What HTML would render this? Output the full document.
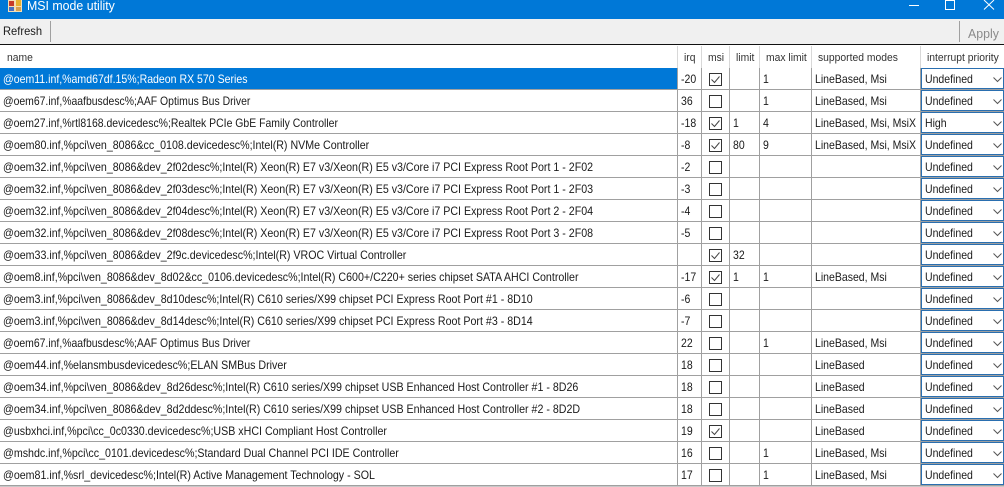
<!DOCTYPE html>
<html><head><meta charset="utf-8"><style>
html,body{margin:0;padding:0;background:#fff}
body{width:1004px;height:487px;position:relative;overflow:hidden;font:12px "Liberation Sans",sans-serif;color:#1a1a1a}
.a{position:absolute}
.o{transform-origin:0 50%}
#t{left:0;top:0;width:1004px;height:19px;background:#0078d7}
#tb{left:0;top:19px;width:1004px;height:25px;background:#f0f0f0}
#bl{left:0;top:44px;width:1004px;height:1px;background:#111}
.r{position:absolute;left:0;width:1004px;height:21px;border-bottom:1px solid #a0a0a0;white-space:nowrap;line-height:23px}
.r span{position:absolute;top:0;transform:scaleX(.875);transform-origin:0 50%}
.r span.n{transform:scaleX(.888)}
.h span{position:absolute;top:0;transform:scaleX(.94);transform-origin:0 50%}
.n{left:3px}.i{left:681px}.l{left:733px}.m{left:763px}.s{left:815px}
.v{position:absolute;top:0;width:1px;height:22px;background:#a0a0a0}
.h .v{background:#d8d8d8}
.c{position:absolute;left:709px;top:5px;width:11px;height:11px;border:1px solid #333;background:#fff}
.c svg{position:absolute;left:0;top:0}
.d{position:absolute;left:921px;top:0;width:81px;height:19px;border:1px solid #2a6fb0;background:#fff;line-height:21px}
.d b{position:absolute;left:3px;top:0;font-weight:normal;transform:scaleX(.875);transform-origin:0 50%}
.d svg{position:absolute;right:1px;top:8px}
.h{position:absolute;left:0;top:46px;width:1004px;height:22px;line-height:24px;font-size:11px;color:#333;white-space:nowrap}
.sel{background:#0078d7;color:#fff}
</style></head><body>
<div class="a" id="t"></div>
<svg class="a" style="left:8px;top:0" width="14" height="12" viewBox="0 0 14 12"><rect x="0" y="0" width="14" height="12" fill="#f5deb3"/><rect x="1" y="1" width="5" height="5" fill="#c83a2a"/><rect x="8" y="0" width="5" height="6" fill="#e8b030"/><rect x="1" y="7" width="5" height="4" fill="#4a6fc0"/><rect x="8" y="7" width="5" height="4" fill="#d9a050"/></svg>
<div class="a o" style="left:27px;top:-2px;color:#fff;font-size:13px;line-height:16px;transform:scaleX(.95);white-space:nowrap">MSI mode utility</div>
<svg class="a" style="left:900px;top:0" width="104" height="19" viewBox="0 0 104 19" fill="none" stroke="#fff" stroke-width="1"><path d="M9 5.5H19"/><rect x="45.5" y="0.5" width="9" height="9"/><path d="M84 0L94 9.5M94 0L84 9.5"/></svg>
<div class="a" id="tb"></div>
<div class="a o" style="left:3px;top:23px;line-height:16px;transform:scaleX(.93);white-space:nowrap">Refresh</div>
<div class="a" style="left:50px;top:21px;width:1px;height:21px;background:#a0a0a0"></div>
<div class="a" style="left:959px;top:21px;width:1px;height:21px;background:#a0a0a0"></div>
<div class="a o" style="left:968px;top:26px;line-height:16px;color:#8a8a8a;font-size:13px;transform:scaleX(.95);white-space:nowrap">Apply</div>
<div class="a" id="bl"></div>
<div class="h"><span style="left:7px">name</span><span style="left:684px">irq</span><span style="left:708px">msi</span><span style="left:736px">limit</span><span style="left:766px">max limit</span><span style="left:818px">supported modes</span><span style="left:927px">interrupt priority</span>
<i class="v" style="left:677px"></i><i class="v" style="left:701px"></i><i class="v" style="left:729px"></i><i class="v" style="left:759px"></i><i class="v" style="left:811px"></i><i class="v" style="left:920px"></i></div>

<div class="r" style="top:68px"><div class="a sel" style="left:0;top:0;width:677px;height:21px"></div><span class="n" style="color:#fff;transform:scaleX(.879)">@oem11.inf,%amd67df.15%;Radeon RX 570 Series</span><span class="i">-20</span><div class="c"><svg width="11" height="11" viewBox="0 0 11 11" fill="none" stroke="#444"><path d="M1.5 5.5L4.5 8.5L9.5 2.5"/></svg></div><span class="m">1</span><span class="s">LineBased, Msi</span><i class="v" style="left:677px"></i><i class="v" style="left:701px"></i><i class="v" style="left:729px"></i><i class="v" style="left:759px"></i><i class="v" style="left:811px"></i><i class="v" style="left:920px"></i><div class="d"><b>Undefined</b><svg width="9" height="6" fill="none" stroke="#555"><path d="M0.5 0.5L4.5 4.5L8.5 0.5"/></svg></div></div>
<div class="r" style="top:90px"><span class="n" style="transform:scaleX(.868)">@oem67.inf,%aafbusdesc%;AAF Optimus Bus Driver</span><span class="i">36</span><div class="c"></div><span class="m">1</span><span class="s">LineBased, Msi</span><i class="v" style="left:677px"></i><i class="v" style="left:701px"></i><i class="v" style="left:729px"></i><i class="v" style="left:759px"></i><i class="v" style="left:811px"></i><i class="v" style="left:920px"></i><div class="d"><b>Undefined</b><svg width="9" height="6" fill="none" stroke="#555"><path d="M0.5 0.5L4.5 4.5L8.5 0.5"/></svg></div></div>
<div class="r" style="top:112px"><span class="n" style="transform:scaleX(.87)">@oem27.inf,%rtl8168.devicedesc%;Realtek PCIe GbE Family Controller</span><span class="i">-18</span><div class="c"><svg width="11" height="11" viewBox="0 0 11 11" fill="none" stroke="#444"><path d="M1.5 5.5L4.5 8.5L9.5 2.5"/></svg></div><span class="l">1</span><span class="m">4</span><span class="s">LineBased, Msi, MsiX</span><i class="v" style="left:677px"></i><i class="v" style="left:701px"></i><i class="v" style="left:729px"></i><i class="v" style="left:759px"></i><i class="v" style="left:811px"></i><i class="v" style="left:920px"></i><div class="d"><b>High</b><svg width="9" height="6" fill="none" stroke="#555"><path d="M0.5 0.5L4.5 4.5L8.5 0.5"/></svg></div></div>
<div class="r" style="top:134px"><span class="n">@oem80.inf,%pci\ven_8086&amp;cc_0108.devicedesc%;Intel(R) NVMe Controller</span><span class="i">-8</span><div class="c"><svg width="11" height="11" viewBox="0 0 11 11" fill="none" stroke="#444"><path d="M1.5 5.5L4.5 8.5L9.5 2.5"/></svg></div><span class="l">80</span><span class="m">9</span><span class="s">LineBased, Msi, MsiX</span><i class="v" style="left:677px"></i><i class="v" style="left:701px"></i><i class="v" style="left:729px"></i><i class="v" style="left:759px"></i><i class="v" style="left:811px"></i><i class="v" style="left:920px"></i><div class="d"><b>Undefined</b><svg width="9" height="6" fill="none" stroke="#555"><path d="M0.5 0.5L4.5 4.5L8.5 0.5"/></svg></div></div>
<div class="r" style="top:156px"><span class="n">@oem32.inf,%pci\ven_8086&amp;dev_2f02desc%;Intel(R) Xeon(R) E7 v3/Xeon(R) E5 v3/Core i7 PCI Express Root Port 1 - 2F02</span><span class="i">-2</span><div class="c"></div><i class="v" style="left:677px"></i><i class="v" style="left:701px"></i><i class="v" style="left:729px"></i><i class="v" style="left:759px"></i><i class="v" style="left:811px"></i><i class="v" style="left:920px"></i><div class="d"><b>Undefined</b><svg width="9" height="6" fill="none" stroke="#555"><path d="M0.5 0.5L4.5 4.5L8.5 0.5"/></svg></div></div>
<div class="r" style="top:178px"><span class="n">@oem32.inf,%pci\ven_8086&amp;dev_2f03desc%;Intel(R) Xeon(R) E7 v3/Xeon(R) E5 v3/Core i7 PCI Express Root Port 1 - 2F03</span><span class="i">-3</span><div class="c"></div><i class="v" style="left:677px"></i><i class="v" style="left:701px"></i><i class="v" style="left:729px"></i><i class="v" style="left:759px"></i><i class="v" style="left:811px"></i><i class="v" style="left:920px"></i><div class="d"><b>Undefined</b><svg width="9" height="6" fill="none" stroke="#555"><path d="M0.5 0.5L4.5 4.5L8.5 0.5"/></svg></div></div>
<div class="r" style="top:200px"><span class="n">@oem32.inf,%pci\ven_8086&amp;dev_2f04desc%;Intel(R) Xeon(R) E7 v3/Xeon(R) E5 v3/Core i7 PCI Express Root Port 2 - 2F04</span><span class="i">-4</span><div class="c"></div><i class="v" style="left:677px"></i><i class="v" style="left:701px"></i><i class="v" style="left:729px"></i><i class="v" style="left:759px"></i><i class="v" style="left:811px"></i><i class="v" style="left:920px"></i><div class="d"><b>Undefined</b><svg width="9" height="6" fill="none" stroke="#555"><path d="M0.5 0.5L4.5 4.5L8.5 0.5"/></svg></div></div>
<div class="r" style="top:222px"><span class="n">@oem32.inf,%pci\ven_8086&amp;dev_2f08desc%;Intel(R) Xeon(R) E7 v3/Xeon(R) E5 v3/Core i7 PCI Express Root Port 3 - 2F08</span><span class="i">-5</span><div class="c"></div><i class="v" style="left:677px"></i><i class="v" style="left:701px"></i><i class="v" style="left:729px"></i><i class="v" style="left:759px"></i><i class="v" style="left:811px"></i><i class="v" style="left:920px"></i><div class="d"><b>Undefined</b><svg width="9" height="6" fill="none" stroke="#555"><path d="M0.5 0.5L4.5 4.5L8.5 0.5"/></svg></div></div>
<div class="r" style="top:244px"><span class="n">@oem33.inf,%pci\ven_8086&amp;dev_2f9c.devicedesc%;Intel(R) VROC Virtual Controller</span><div class="c"><svg width="11" height="11" viewBox="0 0 11 11" fill="none" stroke="#444"><path d="M1.5 5.5L4.5 8.5L9.5 2.5"/></svg></div><span class="l">32</span><i class="v" style="left:677px"></i><i class="v" style="left:701px"></i><i class="v" style="left:729px"></i><i class="v" style="left:759px"></i><i class="v" style="left:811px"></i><i class="v" style="left:920px"></i><div class="d"><b>Undefined</b><svg width="9" height="6" fill="none" stroke="#555"><path d="M0.5 0.5L4.5 4.5L8.5 0.5"/></svg></div></div>
<div class="r" style="top:266px"><span class="n">@oem8.inf,%pci\ven_8086&amp;dev_8d02&amp;cc_0106.devicedesc%;Intel(R) C600+/C220+ series chipset SATA AHCI Controller</span><span class="i">-17</span><div class="c"><svg width="11" height="11" viewBox="0 0 11 11" fill="none" stroke="#444"><path d="M1.5 5.5L4.5 8.5L9.5 2.5"/></svg></div><span class="l">1</span><span class="m">1</span><span class="s">LineBased, Msi</span><i class="v" style="left:677px"></i><i class="v" style="left:701px"></i><i class="v" style="left:729px"></i><i class="v" style="left:759px"></i><i class="v" style="left:811px"></i><i class="v" style="left:920px"></i><div class="d"><b>Undefined</b><svg width="9" height="6" fill="none" stroke="#555"><path d="M0.5 0.5L4.5 4.5L8.5 0.5"/></svg></div></div>
<div class="r" style="top:288px"><span class="n">@oem3.inf,%pci\ven_8086&amp;dev_8d10desc%;Intel(R) C610 series/X99 chipset PCI Express Root Port #1 - 8D10</span><span class="i">-6</span><div class="c"></div><i class="v" style="left:677px"></i><i class="v" style="left:701px"></i><i class="v" style="left:729px"></i><i class="v" style="left:759px"></i><i class="v" style="left:811px"></i><i class="v" style="left:920px"></i><div class="d"><b>Undefined</b><svg width="9" height="6" fill="none" stroke="#555"><path d="M0.5 0.5L4.5 4.5L8.5 0.5"/></svg></div></div>
<div class="r" style="top:310px"><span class="n">@oem3.inf,%pci\ven_8086&amp;dev_8d14desc%;Intel(R) C610 series/X99 chipset PCI Express Root Port #3 - 8D14</span><span class="i">-7</span><div class="c"></div><i class="v" style="left:677px"></i><i class="v" style="left:701px"></i><i class="v" style="left:729px"></i><i class="v" style="left:759px"></i><i class="v" style="left:811px"></i><i class="v" style="left:920px"></i><div class="d"><b>Undefined</b><svg width="9" height="6" fill="none" stroke="#555"><path d="M0.5 0.5L4.5 4.5L8.5 0.5"/></svg></div></div>
<div class="r" style="top:332px"><span class="n" style="transform:scaleX(.868)">@oem67.inf,%aafbusdesc%;AAF Optimus Bus Driver</span><span class="i">22</span><div class="c"></div><span class="m">1</span><span class="s">LineBased, Msi</span><i class="v" style="left:677px"></i><i class="v" style="left:701px"></i><i class="v" style="left:729px"></i><i class="v" style="left:759px"></i><i class="v" style="left:811px"></i><i class="v" style="left:920px"></i><div class="d"><b>Undefined</b><svg width="9" height="6" fill="none" stroke="#555"><path d="M0.5 0.5L4.5 4.5L8.5 0.5"/></svg></div></div>
<div class="r" style="top:354px"><span class="n">@oem44.inf,%elansmbusdevicedesc%;ELAN SMBus Driver</span><span class="i">18</span><div class="c"></div><span class="s">LineBased</span><i class="v" style="left:677px"></i><i class="v" style="left:701px"></i><i class="v" style="left:729px"></i><i class="v" style="left:759px"></i><i class="v" style="left:811px"></i><i class="v" style="left:920px"></i><div class="d"><b>Undefined</b><svg width="9" height="6" fill="none" stroke="#555"><path d="M0.5 0.5L4.5 4.5L8.5 0.5"/></svg></div></div>
<div class="r" style="top:376px"><span class="n">@oem34.inf,%pci\ven_8086&amp;dev_8d26desc%;Intel(R) C610 series/X99 chipset USB Enhanced Host Controller #1 - 8D26</span><span class="i">18</span><div class="c"></div><span class="s">LineBased</span><i class="v" style="left:677px"></i><i class="v" style="left:701px"></i><i class="v" style="left:729px"></i><i class="v" style="left:759px"></i><i class="v" style="left:811px"></i><i class="v" style="left:920px"></i><div class="d"><b>Undefined</b><svg width="9" height="6" fill="none" stroke="#555"><path d="M0.5 0.5L4.5 4.5L8.5 0.5"/></svg></div></div>
<div class="r" style="top:398px"><span class="n">@oem34.inf,%pci\ven_8086&amp;dev_8d2ddesc%;Intel(R) C610 series/X99 chipset USB Enhanced Host Controller #2 - 8D2D</span><span class="i">18</span><div class="c"></div><span class="s">LineBased</span><i class="v" style="left:677px"></i><i class="v" style="left:701px"></i><i class="v" style="left:729px"></i><i class="v" style="left:759px"></i><i class="v" style="left:811px"></i><i class="v" style="left:920px"></i><div class="d"><b>Undefined</b><svg width="9" height="6" fill="none" stroke="#555"><path d="M0.5 0.5L4.5 4.5L8.5 0.5"/></svg></div></div>
<div class="r" style="top:420px"><span class="n">@usbxhci.inf,%pci\cc_0c0330.devicedesc%;USB xHCI Compliant Host Controller</span><span class="i">19</span><div class="c"><svg width="11" height="11" viewBox="0 0 11 11" fill="none" stroke="#444"><path d="M1.5 5.5L4.5 8.5L9.5 2.5"/></svg></div><span class="s">LineBased</span><i class="v" style="left:677px"></i><i class="v" style="left:701px"></i><i class="v" style="left:729px"></i><i class="v" style="left:759px"></i><i class="v" style="left:811px"></i><i class="v" style="left:920px"></i><div class="d"><b>Undefined</b><svg width="9" height="6" fill="none" stroke="#555"><path d="M0.5 0.5L4.5 4.5L8.5 0.5"/></svg></div></div>
<div class="r" style="top:442px"><span class="n">@mshdc.inf,%pci\cc_0101.devicedesc%;Standard Dual Channel PCI IDE Controller</span><span class="i">16</span><div class="c"></div><span class="m">1</span><span class="s">LineBased, Msi</span><i class="v" style="left:677px"></i><i class="v" style="left:701px"></i><i class="v" style="left:729px"></i><i class="v" style="left:759px"></i><i class="v" style="left:811px"></i><i class="v" style="left:920px"></i><div class="d"><b>Undefined</b><svg width="9" height="6" fill="none" stroke="#555"><path d="M0.5 0.5L4.5 4.5L8.5 0.5"/></svg></div></div>
<div class="r" style="top:464px"><span class="n">@oem81.inf,%srl_devicedesc%;Intel(R) Active Management Technology - SOL</span><span class="i">17</span><div class="c"></div><span class="m">1</span><span class="s">LineBased, Msi</span><i class="v" style="left:677px"></i><i class="v" style="left:701px"></i><i class="v" style="left:729px"></i><i class="v" style="left:759px"></i><i class="v" style="left:811px"></i><i class="v" style="left:920px"></i><div class="d"><b>Undefined</b><svg width="9" height="6" fill="none" stroke="#555"><path d="M0.5 0.5L4.5 4.5L8.5 0.5"/></svg></div></div>
<div class="a" style="left:0;top:486px;width:1004px;height:1px;background:#c8c8c8"></div>
</body></html>
